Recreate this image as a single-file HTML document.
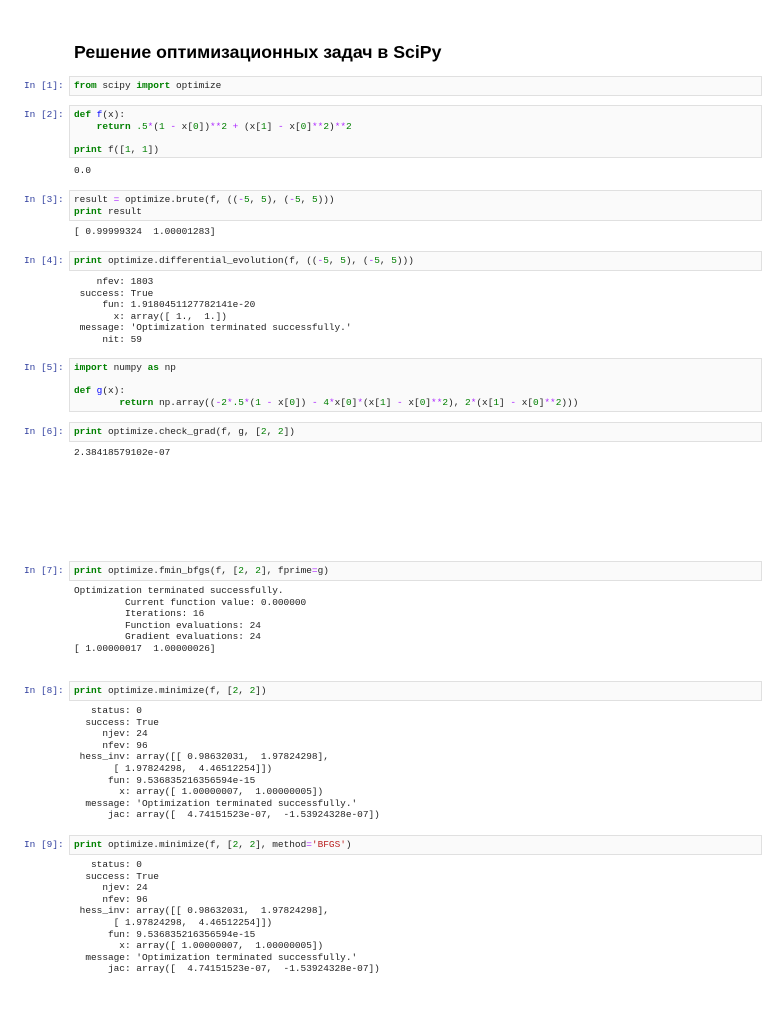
<!DOCTYPE html>
<html><head><meta charset="utf-8"><style>
body{margin:0;width:768px;height:1024px;background:#fff;position:relative;overflow:hidden}
.t{position:absolute;left:74px;top:42px;font:bold 17.7px "Liberation Sans",sans-serif;color:#000;margin:0}
.b{position:absolute;left:69px;width:693px;background:#fafafa;border:1px solid #e0e0e0;box-sizing:border-box}
pre{position:absolute;left:74px;margin:0;font:9.45px/11.6px "Liberation Mono",monospace;color:#222}
.p{position:absolute;left:24px;margin:0;font:9.45px/11.6px "Liberation Mono",monospace;color:#303f9f}
.k{color:#008000;font-weight:bold}.n{color:#008000}.o{color:#aa22ff}.s{color:#ba2121}.f{color:#0000ff}
</style></head><body>
<div class="t">Решение оптимизационных задач в SciPy</div>

<div class="b" style="top:76px;height:20px"></div>
<pre class="p" style="top:80px">In [1]:</pre>
<pre style="top:80px"><span class="k">from</span> scipy <span class="k">import</span> optimize</pre>

<div class="b" style="top:105px;height:53px"></div>
<pre class="p" style="top:109px">In [2]:</pre>
<pre style="top:109px"><span class="k">def</span> <span class="f">f</span>(x):
    <span class="k">return</span> <span class="n">.5</span><span class="o">*</span>(<span class="n">1</span> <span class="o">-</span> x[<span class="n">0</span>])<span class="o">**</span><span class="n">2</span> <span class="o">+</span> (x[<span class="n">1</span>] <span class="o">-</span> x[<span class="n">0</span>]<span class="o">**</span><span class="n">2</span>)<span class="o">**</span><span class="n">2</span>

<span class="k">print</span> f([<span class="n">1</span>, <span class="n">1</span>])</pre>
<pre style="top:165px">0.0</pre>

<div class="b" style="top:190px;height:31px"></div>
<pre class="p" style="top:194px">In [3]:</pre>
<pre style="top:194px">result <span class="o">=</span> optimize.brute(f, ((<span class="o">-</span><span class="n">5</span>, <span class="n">5</span>), (<span class="o">-</span><span class="n">5</span>, <span class="n">5</span>)))
<span class="k">print</span> result</pre>
<pre style="top:226px">[ 0.99999324  1.00001283]</pre>

<div class="b" style="top:251px;height:20px"></div>
<pre class="p" style="top:255px">In [4]:</pre>
<pre style="top:255px"><span class="k">print</span> optimize.differential_evolution(f, ((<span class="o">-</span><span class="n">5</span>, <span class="n">5</span>), (<span class="o">-</span><span class="n">5</span>, <span class="n">5</span>)))</pre>
<pre style="top:276px">    nfev: 1803
 success: True
     fun: 1.9180451127782141e-20
       x: array([ 1.,  1.])
 message: 'Optimization terminated successfully.'
     nit: 59</pre>

<div class="b" style="top:358px;height:54px"></div>
<pre class="p" style="top:362px">In [5]:</pre>
<pre style="top:362px"><span class="k">import</span> numpy <span class="k">as</span> np

<span class="k">def</span> <span class="f">g</span>(x):
        <span class="k">return</span> np.array((<span class="o">-</span><span class="n">2</span><span class="o">*</span><span class="n">.5</span><span class="o">*</span>(<span class="n">1</span> <span class="o">-</span> x[<span class="n">0</span>]) <span class="o">-</span> <span class="n">4</span><span class="o">*</span>x[<span class="n">0</span>]<span class="o">*</span>(x[<span class="n">1</span>] <span class="o">-</span> x[<span class="n">0</span>]<span class="o">**</span><span class="n">2</span>), <span class="n">2</span><span class="o">*</span>(x[<span class="n">1</span>] <span class="o">-</span> x[<span class="n">0</span>]<span class="o">**</span><span class="n">2</span>)))</pre>

<div class="b" style="top:422px;height:20px"></div>
<pre class="p" style="top:426px">In [6]:</pre>
<pre style="top:426px"><span class="k">print</span> optimize.check_grad(f, g, [<span class="n">2</span>, <span class="n">2</span>])</pre>
<pre style="top:447px">2.38418579102e-07</pre>

<div class="b" style="top:561px;height:20px"></div>
<pre class="p" style="top:565px">In [7]:</pre>
<pre style="top:565px"><span class="k">print</span> optimize.fmin_bfgs(f, [<span class="n">2</span>, <span class="n">2</span>], fprime<span class="o">=</span>g)</pre>
<pre style="top:585px">Optimization terminated successfully.
         Current function value: 0.000000
         Iterations: 16
         Function evaluations: 24
         Gradient evaluations: 24
[ 1.00000017  1.00000026]</pre>

<div class="b" style="top:681px;height:20px"></div>
<pre class="p" style="top:685px">In [8]:</pre>
<pre style="top:685px"><span class="k">print</span> optimize.minimize(f, [<span class="n">2</span>, <span class="n">2</span>])</pre>
<pre style="top:705px">   status: 0
  success: True
     njev: 24
     nfev: 96
 hess_inv: array([[ 0.98632031,  1.97824298],
       [ 1.97824298,  4.46512254]])
      fun: 9.536835216356594e-15
        x: array([ 1.00000007,  1.00000005])
  message: 'Optimization terminated successfully.'
      jac: array([  4.74151523e-07,  -1.53924328e-07])</pre>

<div class="b" style="top:835px;height:20px"></div>
<pre class="p" style="top:839px">In [9]:</pre>
<pre style="top:839px"><span class="k">print</span> optimize.minimize(f, [<span class="n">2</span>, <span class="n">2</span>], method<span class="o">=</span><span class="s">'BFGS'</span>)</pre>
<pre style="top:859px">   status: 0
  success: True
     njev: 24
     nfev: 96
 hess_inv: array([[ 0.98632031,  1.97824298],
       [ 1.97824298,  4.46512254]])
      fun: 9.536835216356594e-15
        x: array([ 1.00000007,  1.00000005])
  message: 'Optimization terminated successfully.'
      jac: array([  4.74151523e-07,  -1.53924328e-07])</pre>
</body></html>
